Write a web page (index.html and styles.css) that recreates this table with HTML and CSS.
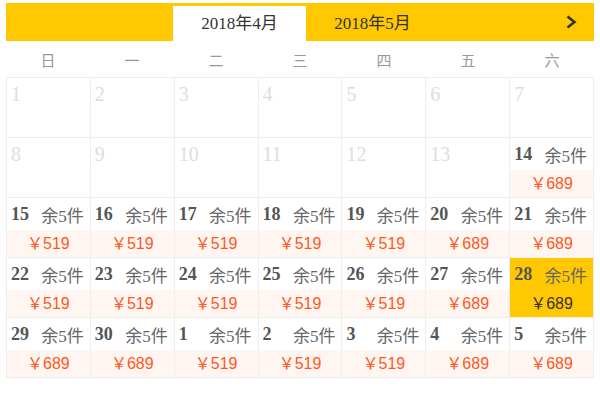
FILE: index.html
```html
<!DOCTYPE html>
<html lang="zh">
<head>
<meta charset="utf-8">
<link rel="stylesheet" href="styles.css">
</head>
<body>
<div class="cal">
  <div class="bar">
    <div class="tab active">2018年4月</div>
    <div class="tab">2018年5月</div>
    <svg class="next" width="11" height="14" viewBox="0 0 11 14"><polyline points="1.5,1.5 8.5,7 1.5,12.5" fill="none" stroke="#333" stroke-width="2.6" stroke-linejoin="miter"/></svg>
  </div>
  <div class="week">
    <span>日</span><span>一</span><span>二</span><span>三</span><span>四</span><span>五</span><span>六</span>
  </div>
  <div class="grid">
    <div class="cell off"><div class="top"><b>1</b></div></div>
    <div class="cell off"><div class="top"><b>2</b></div></div>
    <div class="cell off"><div class="top"><b>3</b></div></div>
    <div class="cell off"><div class="top"><b>4</b></div></div>
    <div class="cell off"><div class="top"><b>5</b></div></div>
    <div class="cell off"><div class="top"><b>6</b></div></div>
    <div class="cell off"><div class="top"><b>7</b></div></div>

    <div class="cell off"><div class="top"><b>8</b></div></div>
    <div class="cell off"><div class="top"><b>9</b></div></div>
    <div class="cell off"><div class="top"><b>10</b></div></div>
    <div class="cell off"><div class="top"><b>11</b></div></div>
    <div class="cell off"><div class="top"><b>12</b></div></div>
    <div class="cell off"><div class="top"><b>13</b></div></div>
    <div class="cell"><div class="top"><b>14</b><span>余5件</span></div><div class="price">￥689</div></div>

    <div class="cell"><div class="top"><b>15</b><span>余5件</span></div><div class="price">￥519</div></div>
    <div class="cell"><div class="top"><b>16</b><span>余5件</span></div><div class="price">￥519</div></div>
    <div class="cell"><div class="top"><b>17</b><span>余5件</span></div><div class="price">￥519</div></div>
    <div class="cell"><div class="top"><b>18</b><span>余5件</span></div><div class="price">￥519</div></div>
    <div class="cell"><div class="top"><b>19</b><span>余5件</span></div><div class="price">￥519</div></div>
    <div class="cell"><div class="top"><b>20</b><span>余5件</span></div><div class="price">￥689</div></div>
    <div class="cell"><div class="top"><b>21</b><span>余5件</span></div><div class="price">￥689</div></div>

    <div class="cell"><div class="top"><b>22</b><span>余5件</span></div><div class="price">￥519</div></div>
    <div class="cell"><div class="top"><b>23</b><span>余5件</span></div><div class="price">￥519</div></div>
    <div class="cell"><div class="top"><b>24</b><span>余5件</span></div><div class="price">￥519</div></div>
    <div class="cell"><div class="top"><b>25</b><span>余5件</span></div><div class="price">￥519</div></div>
    <div class="cell"><div class="top"><b>26</b><span>余5件</span></div><div class="price">￥519</div></div>
    <div class="cell"><div class="top"><b>27</b><span>余5件</span></div><div class="price">￥689</div></div>
    <div class="cell sel"><div class="top"><b>28</b><span>余5件</span></div><div class="price">￥689</div></div>

    <div class="cell"><div class="top"><b>29</b><span>余5件</span></div><div class="price">￥689</div></div>
    <div class="cell"><div class="top"><b>30</b><span>余5件</span></div><div class="price">￥689</div></div>
    <div class="cell"><div class="top"><b>1</b><span>余5件</span></div><div class="price">￥519</div></div>
    <div class="cell"><div class="top"><b>2</b><span>余5件</span></div><div class="price">￥519</div></div>
    <div class="cell"><div class="top"><b>3</b><span>余5件</span></div><div class="price">￥519</div></div>
    <div class="cell"><div class="top"><b>4</b><span>余5件</span></div><div class="price">￥689</div></div>
    <div class="cell"><div class="top"><b>5</b><span>余5件</span></div><div class="price">￥689</div></div>
  </div>
</div>
</body>
</html>
```

FILE: styles.css
```css
html, body {
  margin: 0;
  padding: 0;
  background: #fff;
}
body {
  font-family: "Liberation Serif", "Noto Sans CJK SC", serif;
}
.cal {
  padding: 3px 6px 0 6px;
  width: 588px;
}
.bar {
  display: flex;
  align-items: flex-end;
  height: 38px;
  background: #ffc800;
}
.tab {
  width: 133px;
  height: 35px;
  line-height: 35px;
  text-align: center;
  font-size: 17px;
  color: #333;
}
.tab:first-child {
  margin-left: 167px;
}
.tab.active {
  background: #fff;
}
.next {
  margin-left: auto;
  margin-right: 17px;
  align-self: center;
}
.week {
  display: grid;
  grid-template-columns: repeat(7, 1fr);
  height: 36px;
  align-items: center;
  text-align: center;
  font-family: "Noto Sans CJK SC", sans-serif;
  font-size: 15px;
  color: #999;
}
.grid {
  display: grid;
  grid-template-columns: repeat(7, 1fr);
  border-left: 1px solid #eee;
  border-top: 1px solid #eee;
}
.cell {
  height: 60px;
  border-right: 1px solid #eee;
  border-bottom: 1px solid #eee;
  box-sizing: border-box;
  display: flex;
  flex-direction: column;
}
.top {
  height: 32px;
  display: flex;
  align-items: center;
  justify-content: space-between;
  padding: 0 6px 0 4px;
}
.top b {
  font-size: 18px;
  font-weight: bold;
  color: #555;
}
.top span {
  font-size: 17px;
  color: #666;
}
.price {
  flex: 1;
  background: #fff6f1;
  color: #ff5722;
  text-align: center;
  font-family: "Liberation Sans", "Noto Sans CJK SC", sans-serif;
  font-size: 16px;
  line-height: 27px;
}
.off .top b {
  font-size: 20px;
  font-weight: normal;
  color: #ddd;
}
.sel {
  background: #ffc800;
}
.sel .price {
  background: #ffc800;
  color: #333;
}
```
